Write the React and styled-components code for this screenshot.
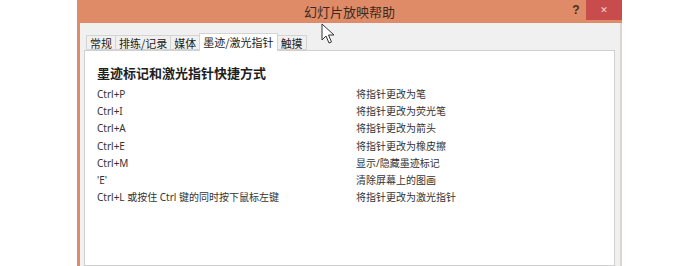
import React from 'react';
import styled, {createGlobalStyle} from 'styled-components';

const GlobalStyle = createGlobalStyle`
  html, body {
    margin: 0;
    padding: 0;
    background: #fff;
  }
  body {
    font-family: "Noto Sans", "Noto Sans CJK SC", sans-serif;
  }
`;

const tabs = ['常规', '排练/记录', '媒体', '墨迹/激光指针', '触摸'];

const shortcuts = [
  ['Ctrl+P', '将指针更改为笔'],
  ['Ctrl+I', '将指针更改为荧光笔'],
  ['Ctrl+A', '将指针更改为箭头'],
  ['Ctrl+E', '将指针更改为橡皮擦'],
  ['Ctrl+M', '显示/隐藏墨迹标记'],
  ["'E'", '清除屏幕上的图画'],
  ['Ctrl+L 或按住 Ctrl 键的同时按下鼠标左键', '将指针更改为激光指针'],
];

const App = () => {
  return (
    <Page>
      <GlobalStyle />
      <Window>
        <TitleBar>
          <Title>幻灯片放映帮助</Title>
          <Help>?</Help>
          <Close>✕</Close>
        </TitleBar>
        <Body>
          <TabRow>
            {tabs.map((t, i) => (
              <Tab key={t} active={i === 3}>{t}</Tab>
            ))}
          </TabRow>
          <Panel>
            <Heading>墨迹标记和激光指针快捷方式</Heading>
            <Table>
              {shortcuts.map(([k, v]) => (
                <React.Fragment key={k}>
                  <Cell>{k}</Cell>
                  <Cell>{v}</Cell>
                </React.Fragment>
              ))}
            </Table>
          </Panel>
        </Body>
        <Cursor width="14" height="22" viewBox="0 0 14 22">
          <path d="M1 1 L1 17 L5 13 L8 20 L10.5 19 L7.5 12 L13 12 Z" fill="#fff" stroke="#333" strokeWidth="1" strokeLinejoin="round" />
        </Cursor>
      </Window>
    </Page>
  );
};

export default App;

const Page = styled.div`
  width: 700px;
  height: 266px;
  overflow: hidden;
  padding-left: 77px;
  box-sizing: border-box;
`;

const Window = styled.div`
  position: relative;
  width: 545px;
  height: 266px;
  display: flex;
  flex-direction: column;
`;

const TitleBar = styled.div`
  height: 23px;
  flex-shrink: 0;
  background: #df8b68;
  display: flex;
  align-items: flex-start;
  position: relative;
`;

const Title = styled.div`
  position: absolute;
  left: 0;
  right: 0;
  top: 3px;
  text-align: center;
  font-family: "Noto Sans CJK SC", sans-serif;
  font-size: 13px;
  line-height: 17px;
  color: #3b2a22;
  pointer-events: none;
`;

const Help = styled.div`
  margin-left: auto;
  width: 16px;
  height: 20px;
  line-height: 20px;
  text-align: center;
  font-family: "Liberation Sans", sans-serif;
  font-weight: bold;
  font-size: 12px;
  color: #4a2c22;
  margin-right: 2px;
`;

const Close = styled.div`
  width: 36px;
  height: 20px;
  background: #c94c4c;
  color: #f3d2d2;
  font-family: "DejaVu Sans", sans-serif;
  font-size: 9px;
  line-height: 20px;
  text-align: center;
`;

const Body = styled.div`
  flex: 1;
  background: #f0f0f0;
  border-left: 3px solid #df8b68;
  border-right: 2px solid #dcd6d3;
  padding: 10px 5px 0 4px;
  display: flex;
  flex-direction: column;
`;

const TabRow = styled.div`
  display: flex;
  align-items: flex-end;
  padding-left: 3px;
  height: 17px;
  position: relative;
  z-index: 1;
`;

const Tab = styled.div`
  font-family: "Noto Sans CJK SC", sans-serif;
  font-size: 11px;
  color: #222;
  padding: 0 3px;
  height: ${p => (p.active ? '18px' : '15px')};
  line-height: ${p => (p.active ? '16px' : '15px')};
  margin-bottom: ${p => (p.active ? '-1px' : '0')};
  background: ${p => (p.active ? '#fff' : '#f0f0f0')};
  border: 1px solid #d4d4d4;
  border-bottom: ${p => (p.active ? 'none' : '1px solid #d4d4d4')};
  margin-left: -1px;
  box-sizing: border-box;
`;

const Panel = styled.div`
  flex: 1;
  background: #fff;
  border: 1px solid #d0d0d0;
  padding: 13px 12px 0 12px;
`;

const Heading = styled.div`
  font-family: "Noto Sans CJK SC", sans-serif;
  font-weight: bold;
  font-size: 13px;
  line-height: 18px;
  color: #1e1e1e;
  margin-bottom: 4px;
`;

const Table = styled.div`
  display: grid;
  grid-template-columns: 259px 1fr;
  grid-auto-rows: 17.2px;
`;

const Cell = styled.div`
  font-family: "Noto Sans", "Noto Sans CJK SC", sans-serif;
  font-size: 10px;
  line-height: 17px;
  color: #333;
  white-space: nowrap;
`;

const Cursor = styled.svg`
  position: absolute;
  left: 244px;
  top: 23px;
`;
